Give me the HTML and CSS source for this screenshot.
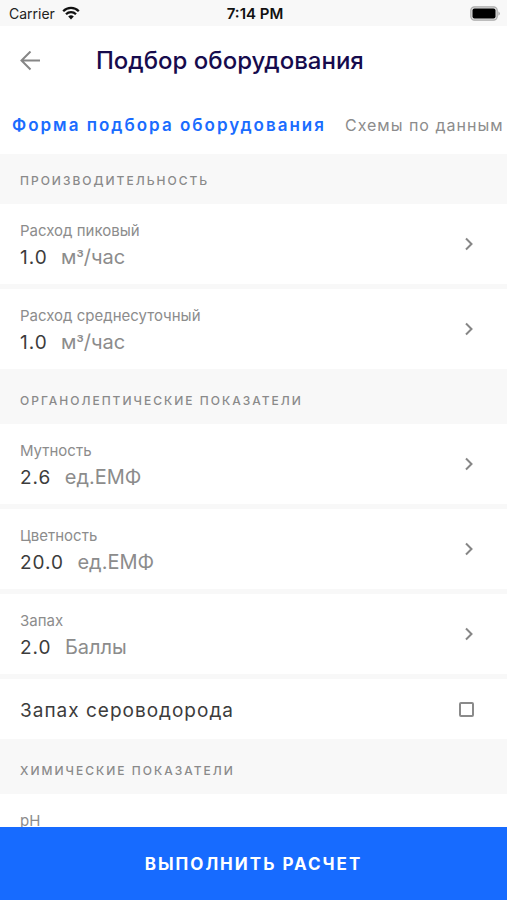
FILE: index.html
```html
<!DOCTYPE html>
<html lang="ru">
<head>
<meta charset="utf-8">
<meta name="viewport" content="width=device-width, initial-scale=1">
<title>Подбор оборудования</title>
<link rel="stylesheet" href="styles.css">
</head>
<body>
<div class="status">
  <div class="carrier">
    <span>Carrier</span>
    <svg class="wifi" viewBox="0 0 18 14" aria-hidden="true"><path d="M1.2 5.2a11 11 0 0 1 15.6 0M4 8.2a7.1 7.1 0 0 1 10 0" fill="none" stroke="#111" stroke-width="2.3"/><path d="M9 13.4 6.2 10.5a4 4 0 0 1 5.6 0z" fill="#111"/></svg>
  </div>
  <time class="clock">7:14 PM</time>
  <svg class="battery" viewBox="0 0 31 15" aria-hidden="true"><rect x=".8" y=".8" width="26.4" height="13.4" rx="3.6" fill="#ddd" stroke="#aaa" stroke-width="1.2"/><rect x="2.5" y="2.5" width="23" height="10" rx="2" fill="#000"/><path d="M28.4 5.2q3 2.3 0 4.6z" fill="#aaa"/></svg>
</div>
<header class="header">
  <button class="back" type="button" aria-label="Назад">
    <svg viewBox="0 0 20 20" aria-hidden="true"><path d="M20 9.5H1.5M10.5.5l-9 9 9 9" fill="none" stroke="#868686" stroke-width="2"/></svg>
  </button>
  <h1 class="title">Подбор оборудования</h1>
</header>
<nav class="tabs">
  <a class="tab tab-active" href="#form" aria-current="page">Форма подбора оборудования</a>
  <a class="tab" href="#schemes">Схемы по данным</a>
</nav>
<main class="list" id="form">
  <h2 class="section section-first">ПРОИЗВОДИТЕЛЬНОСТЬ</h2>
  <div class="group">
    <button class="row" type="button">
      <span class="field"><span class="label">Расход пиковый</span><span class="value">1.0 <span class="unit">м<span class="power">³</span>/час</span></span></span>
      <svg class="chevron" viewBox="0 0 8 14" aria-hidden="true"><path d="m1 1.5 5.5 5.5L1 12.5"/></svg>
    </button>
    <button class="row" type="button">
      <span class="field"><span class="label">Расход среднесуточный</span><span class="value">1.0 <span class="unit">м<span class="power">³</span>/час</span></span></span>
      <svg class="chevron" viewBox="0 0 8 14" aria-hidden="true"><path d="m1 1.5 5.5 5.5L1 12.5"/></svg>
    </button>
  </div>
  <h2 class="section">ОРГАНОЛЕПТИЧЕСКИЕ ПОКАЗАТЕЛИ</h2>
  <div class="group">
    <button class="row" type="button">
      <span class="field"><span class="label">Мутность</span><span class="value">2.6 <span class="unit">ед.ЕМФ</span></span></span>
      <svg class="chevron" viewBox="0 0 8 14" aria-hidden="true"><path d="m1 1.5 5.5 5.5L1 12.5"/></svg>
    </button>
    <button class="row" type="button">
      <span class="field"><span class="label">Цветность</span><span class="value">20.0 <span class="unit">ед.ЕМФ</span></span></span>
      <svg class="chevron" viewBox="0 0 8 14" aria-hidden="true"><path d="m1 1.5 5.5 5.5L1 12.5"/></svg>
    </button>
    <button class="row" type="button">
      <span class="field"><span class="label">Запах</span><span class="value">2.0 <span class="unit">Баллы</span></span></span>
      <svg class="chevron" viewBox="0 0 8 14" aria-hidden="true"><path d="m1 1.5 5.5 5.5L1 12.5"/></svg>
    </button>
    <div class="check-row">
      <label class="check-label" for="h2s">Запах сероводорода</label>
      <input class="check" type="checkbox" id="h2s">
    </div>
  </div>
  <h2 class="section">ХИМИЧЕСКИЕ ПОКАЗАТЕЛИ</h2>
  <div class="group">
    <button class="row" type="button">
      <span class="field"><span class="label">pH</span></span>
    </button>
  </div>
</main>
<footer class="footer">
  <button class="submit" type="button">ВЫПОЛНИТЬ РАСЧЕТ</button>
</footer>
</body>
</html>
```
FILE: styles.css
```css
* { box-sizing: border-box; }

body {
  margin: 0;
  height: 100vh;
  display: flex;
  flex-direction: column;
  overflow: hidden;
  background: #fff;
  color: #3c3c3c;
  font-family: Inter, "Liberation Sans", sans-serif;
}

button {
  border: 0;
  padding: 0;
  background: none;
  font: inherit;
  color: inherit;
  cursor: pointer;
}

.status {
  flex: none;
  display: grid;
  grid-template-columns: 1fr auto 1fr;
  align-items: center;
  height: 26px;
  padding: 0 6px 0 9px;
  background: #f8f8f8;
  color: #222;
  font-size: 14px;
}
.carrier { display: flex; align-items: center; gap: 7px; }
.wifi { width: 18px; height: 14px; }
.clock { font-size: 15px; font-weight: 600; color: #111; }
.battery { width: 31px; height: 15px; justify-self: end; }

.header {
  flex: none;
  display: flex;
  align-items: center;
  gap: 56px;
  height: 69px;
  padding: 0 20px;
}
.back { display: flex; }
.back svg { width: 20px; height: 20px; }
.title {
  margin: 0;
  font-size: 24px;
  font-weight: 500;
  line-height: 32px;
  color: #160b4d;
  white-space: nowrap;
}

.tabs {
  flex: none;
  display: flex;
  align-items: center;
  gap: 19px;
  height: 59px;
  padding: 0 0 0 12px;
  overflow: hidden;
}
.tab {
  font-size: 16px;
  line-height: 24px;
  letter-spacing: 1px;
  color: #8c8c8c;
  text-decoration: none;
  white-space: nowrap;
}
.tab-active {
  font-size: 17px;
  font-weight: 600;
  letter-spacing: 2px;
  color: #1a6cff;
}

.list {
  flex: 1;
  min-height: 0;
  overflow-y: auto;
  scrollbar-width: none;
  background: #f8f8f8;
}
.section {
  display: flex;
  align-items: flex-end;
  height: 55px;
  margin: 0;
  padding: 0 20px 15px;
  font-size: 12px;
  font-weight: 500;
  line-height: 16px;
  letter-spacing: 2px;
  color: #8a8a8a;
}
.section-first { height: 50px; }
.group { display: flex; flex-direction: column; gap: 5px; }
.row {
  display: flex;
  align-items: center;
  justify-content: space-between;
  width: 100%;
  height: 80px;
  padding: 0 34px 0 20px;
  background: #fff;
  text-align: left;
}
.field { align-self: flex-start; display: flex; flex-direction: column; padding-top: 17px; }
.label { font-size: 15px; line-height: 20px; color: #8c8c8c; }
.value { font-size: 19px; line-height: 32px; letter-spacing: 1px; }
.unit { margin-left: 7px; font-size: 20px; letter-spacing: 0; color: #8c8c8c; }
.power { font-family: Roboto, sans-serif; line-height: 1; }
.chevron { width: 8px; height: 14px; fill: none; stroke: #868686; stroke-width: 2; }

.check-row {
  display: flex;
  align-items: center;
  justify-content: space-between;
  height: 60px;
  padding: 0 33px 0 20px;
  background: #fff;
}
.check-label { padding-top: 4px; font-size: 19px; line-height: 28px; letter-spacing: 1px; }
.check {
  appearance: none;
  width: 15px;
  height: 15px;
  margin: 0;
  border: 2px solid #8a8a8a;
  border-radius: 2px;
}
.check:checked { background: #1a6cff; border-color: #1a6cff; }

.footer { flex: none; }
.submit {
  display: block;
  width: 100%;
  height: 73px;
  background: #176bff;
  color: #fff;
  font-size: 17px;
  font-weight: 700;
  letter-spacing: 2px;
}
```
